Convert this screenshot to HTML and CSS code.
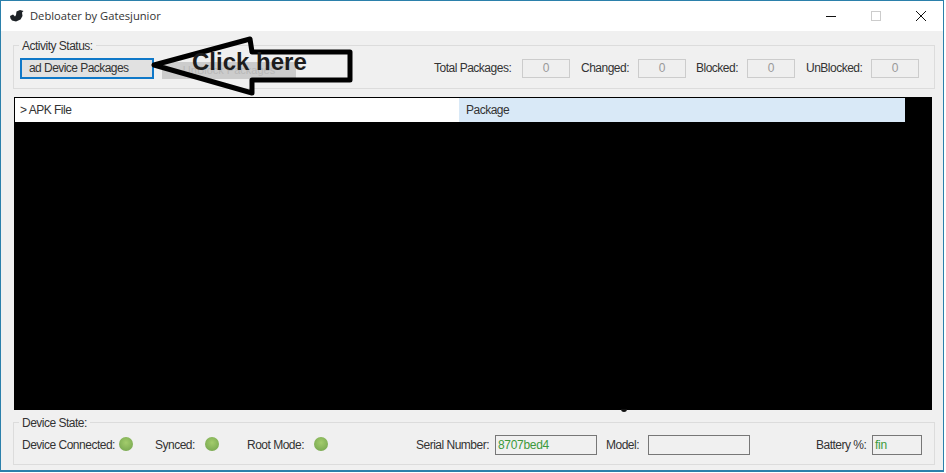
FILE: index.html
```html
<!DOCTYPE html>
<html lang="en">
<head>
<meta charset="utf-8">
<title>Debloater by Gatesjunior</title>
<link rel="stylesheet" href="styles.css">
</head>
<body>
<div class="window">
  <header class="titlebar">
    <svg class="app-icon" viewBox="0 0 14 12" width="14" height="12"><path d="M0 6 L3 4.5 L5 6.5 L6 5 L6.5 1.5 L10 0 L13.5 1 L12 2.5 L12.5 6 L10.5 9.5 L6 11.5 L2 10.5 L0.5 8.5 Z" fill="#1c2126"/></svg>
    <span class="title">Debloater by Gatesjunior</span>
    <div class="controls">
      <svg class="ctl" viewBox="0 0 10 10" width="10" height="10"><path d="M0 5.5H10" stroke="#111" stroke-width="1"/></svg>
      <svg class="ctl" viewBox="0 0 10 10" width="10" height="10"><rect x=".5" y=".5" width="9" height="9" fill="none" stroke="#ccc"/></svg>
      <svg class="ctl" viewBox="0 0 10 10" width="10" height="10"><path d="M0 0L10 10M10 0L0 10" stroke="#111" stroke-width="1"/></svg>
    </div>
  </header>
  <main class="content">
    <section class="group group-activity">
      <span class="legend">Activity Status:</span>
      <button class="btn btn-load">ad Device Packages</button>
      <button class="btn btn-unblock" disabled>UnBlock Packages</button>
      <div class="stats">
        <span class="lbl lbl-total">Total Packages:</span><span class="stat stat-total">0</span>
        <span class="lbl lbl-changed">Changed:</span><span class="stat stat-changed">0</span>
        <span class="lbl lbl-blocked">Blocked:</span><span class="stat stat-blocked">0</span>
        <span class="lbl lbl-unblocked">UnBlocked:</span><span class="stat">0</span>
      </div>
    </section>
    <section class="list">
      <div class="list-head">
        <div class="col col-apk">&gt; APK File</div>
        <div class="col col-pkg">Package</div>
      </div>
      <span class="cursor-bump"></span>
    </section>
    <section class="group group-device">
      <span class="legend">Device State:</span>
      <span class="lbl lbl-conn">Device Connected:</span><span class="led led-conn"></span>
      <span class="lbl lbl-synced">Synced:</span><span class="led led-sync"></span>
      <span class="lbl lbl-root">Root Mode:</span><span class="led led-root"></span>
      <span class="lbl lbl-serial">Serial Number:</span><span class="field field-serial">8707bed4</span>
      <span class="lbl lbl-model">Model:</span><span class="field field-model"></span>
      <span class="lbl lbl-battery">Battery %:</span><span class="field field-battery">fin</span>
    </section>
  </main>
</div>
<div class="callout">
  <svg class="arrow" viewBox="0 0 210 62" width="210" height="62"><path d="M6 29 L102 3 L104 16 L202 16 L202 44 L104 44 L104 57 Z" fill="none" stroke="#000" stroke-width="5" stroke-linejoin="round"/></svg>
  <span class="callout-text">Click here</span>
</div>
</body>
</html>
```
FILE: styles.css
```css
* { box-sizing: border-box; }
html, body { margin: 0; padding: 0; }
body {
  width: 946px;
  height: 473px;
  overflow: hidden;
  background: #fff;
  font-family: "Liberation Sans", Arial, sans-serif;
  font-size: 12px;
  color: #333;
  position: relative;
}
.window {
  width: 944px;
  height: 472px;
  border: 1px solid #2b80ab;
  border-bottom-width: 2px;
  display: flex;
  flex-direction: column;
}
.titlebar {
  height: 30px;
  flex: none;
  background: #fff;
  display: flex;
  align-items: center;
  padding-left: 9px;
}
.app-icon { margin-right: 6px; margin-top: -1px; }
.title { font-family: "Open Sans", sans-serif; font-size: 11.2px; color: #333; margin-top: -2px; }
.controls {
  margin-left: auto;
  margin-right: 17px;
  display: flex;
  gap: 35px;
}
.content {
  flex: 1;
  background: #f0f0f0;
  padding: 14px 8px 0 12px;
  display: flex;
  flex-direction: column;
}
.group {
  position: relative;
  border: 1px solid #dcdcdc;
  display: flex;
  align-items: center;
  height: 44px;
  padding-left: 8px;
}
.legend {
  position: absolute;
  left: 5px;
  top: -7px;
  padding: 0 3px;
  background: #f0f0f0;
  color: #333;
  line-height: 14px;
  letter-spacing: -0.5px;
}
.group-activity { padding-left: 6px; padding-top: 2px; }
.btn {
  font: inherit;
  height: 21px;
  width: 134px;
  padding: 0 0 1px 7px;
  text-align: left;
  color: #333;
  background: #e1e1e1;
  border: 2px solid #0f78c8;
  flex: none;
  letter-spacing: -0.55px;
}
.btn-unblock {
  margin-left: 8px;
  margin-top: 4px;
  height: 17px;
  background: #cccccc;
  border: none;
  color: #b8b8b8;
  text-align: center;
  padding: 0;
  font-size: 11px;
  letter-spacing: 0;
}
.stats {
  margin-left: auto;
  margin-right: 15px;
  display: flex;
  align-items: center;
}
.lbl { color: #333; white-space: nowrap; letter-spacing: -0.5px; flex: none; }
.stat {
  width: 48px;
  height: 19px;
  border: 1px solid #ccc;
  background: #efefef;
  color: #999;
  display: flex;
  align-items: center;
  justify-content: center;
  flex: none;
}
.stat-total { margin-left: 10px; margin-right: 11px; }
.stat-changed { margin-left: 10px; margin-right: 10px; }
.stat-blocked { margin-left: 10px; margin-right: 11px; }
.lbl-unblocked { margin-right: 9px; }
.lbl-changed { width: 47px; }
.lbl-blocked { width: 41px; }
.lbl-total { width: 78px; }
.lbl-unblocked { width: 56px; }
.list {
  position: relative;
  margin: 8px 3px 0 1px;
  height: 313px;
  background: #000;
  padding: 1px;
}
.list-head {
  display: flex;
  height: 24px;
  width: 890px;
}
.col { display: flex; align-items: center; color: #333; letter-spacing: -0.5px; }
.col-apk { width: 444px; background: #fff; padding-left: 5px; }
.col-pkg { flex: 1; background: #d9e9f7; padding-left: 7px; }
.cursor-bump {
  position: absolute;
  left: 607px;
  bottom: -2px;
  width: 6px;
  height: 3px;
  border-radius: 0 0 3px 3px;
  background: #111;
}
.group-device {
  margin-top: 12px;
  height: 43px;
  padding-top: 3px;
}
.led {
  width: 14px;
  height: 14px;
  margin-top: -3px;
  border-radius: 50%;
  background: radial-gradient(circle at 50% 40%, #a3cc6c, #7fae55 70%, #6f9d48);
  flex: none;
}
.lbl-conn { width: 91px; }
.led-conn { margin-left: 6px; }
.lbl-synced { margin-left: 22px; width: 38px; }
.led-sync { margin-left: 12px; }
.lbl-root { margin-left: 28px; width: 56px; }
.led-root { margin-left: 11px; }
.lbl-serial { margin-left: 88px; width: 69px; }
.field {
  height: 20px;
  border: 1px solid #777;
  background: #f0f0f0;
  color: #3c9a3c;
  display: flex;
  align-items: center;
  padding-left: 2px;
  flex: none;
  letter-spacing: -0.3px;
}
.field-serial { width: 102px; margin-left: 10px; }
.lbl-model { margin-left: 9px; width: 32px; }
.field-model { width: 102px; margin-left: 10px; }
.lbl-battery { margin-left: 66px; width: 47px; }
.field-battery { width: 50px; margin-left: 9px; }
.callout {
  position: absolute;
  left: 148px;
  top: 36px;
  width: 210px;
  height: 62px;
}
.arrow { display: block; }
.callout-text {
  position: absolute;
  left: 44px;
  top: 12px;
  font-size: 24px;
  font-weight: 700;
  line-height: 28px;
  color: #1d1d1d;
  white-space: nowrap;
}
```
